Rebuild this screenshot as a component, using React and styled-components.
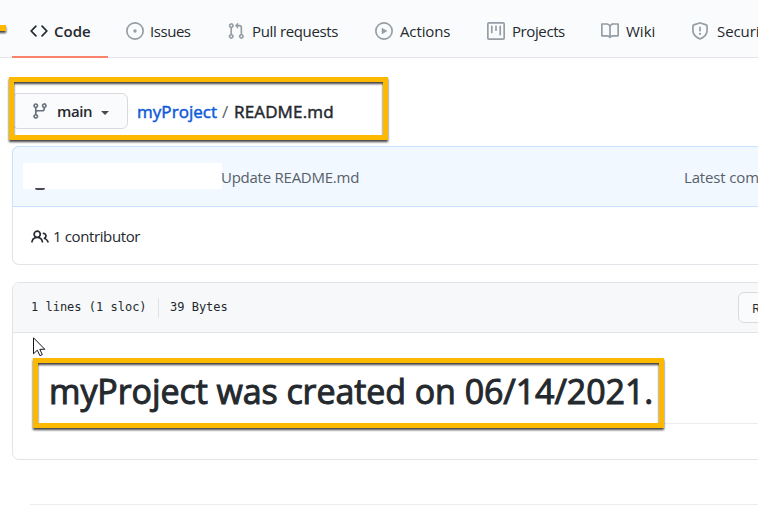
import React from "react";
import styled, { createGlobalStyle } from "styled-components";

const GlobalStyle = createGlobalStyle`
  *, *::before, *::after { box-sizing: border-box; }
  html, body { margin: 0; background: #fff; overflow: hidden; }
  body {
    font-family: "Open Sans", "Noto Sans", sans-serif;
    font-size: 15px;
    color: #24292e;
  }
`;

const ICONS = {
  code: "M4.72 3.22a.75.75 0 011.06 1.06L2.06 8l3.72 3.72a.75.75 0 11-1.06 1.06L.47 8.53a.75.75 0 010-1.06l4.25-4.25zm6.56 0a.75.75 0 10-1.06 1.06L13.94 8l-3.72 3.72a.75.75 0 101.06 1.06l4.25-4.25a.75.75 0 000-1.06l-4.25-4.25z",
  issue: "M8 9.5a1.5 1.5 0 100-3 1.5 1.5 0 000 3zM8 0a8 8 0 100 16A8 8 0 008 0zM1.5 8a6.5 6.5 0 1113 0 6.5 6.5 0 01-13 0z",
  pull: "M7.177 3.073L9.573.677A.25.25 0 0110 .854v4.792a.25.25 0 01-.427.177L7.177 3.427a.25.25 0 010-.354zM3.75 2.5a.75.75 0 100 1.5.75.75 0 000-1.5zm-2.25.75a2.25 2.25 0 113 2.122v5.256a2.251 2.251 0 11-1.5 0V5.372A2.25 2.25 0 011.5 3.25zM11 2.5h-1V4h1a1 1 0 011 1v5.628a2.251 2.251 0 101.5 0V5A2.5 2.5 0 0011 2.5zm1 10.25a.75.75 0 111.5 0 .75.75 0 01-1.5 0zM3.75 12a.75.75 0 100 1.5.75.75 0 000-1.5z",
  play: "M1.5 8a6.5 6.5 0 1113 0 6.5 6.5 0 01-13 0zM8 0a8 8 0 100 16A8 8 0 008 0zM6.379 5.227A.25.25 0 006 5.442v5.117a.25.25 0 00.379.214l4.264-2.559a.25.25 0 000-.428L6.379 5.227z",
  project: "M1.75 0A1.75 1.75 0 000 1.75v12.5C0 15.216.784 16 1.75 16h12.5A1.75 1.75 0 0016 14.25V1.75A1.75 1.75 0 0014.25 0H1.75zM1.5 1.75a.25.25 0 01.25-.25h12.5a.25.25 0 01.25.25v12.5a.25.25 0 01-.25.25H1.75a.25.25 0 01-.25-.25V1.75zM11.75 3a.75.75 0 00-.75.75v7.5a.75.75 0 001.5 0v-7.5a.75.75 0 00-.75-.75zm-8.25.75a.75.75 0 011.5 0v5.5a.75.75 0 01-1.5 0v-5.5zM8 3a.75.75 0 00-.75.75v3.5a.75.75 0 001.5 0v-3.5A.75.75 0 008 3z",
  book: "M0 1.75A.75.75 0 01.75 1h4.253c1.227 0 2.317.59 3 1.501A3.744 3.744 0 0111.006 1h4.245a.75.75 0 01.75.75v10.5a.75.75 0 01-.75.75h-4.507a2.25 2.25 0 00-1.591.659l-.622.621a.75.75 0 01-1.06 0l-.622-.621A2.25 2.25 0 005.258 13H.75a.75.75 0 01-.75-.75V1.75zm8.755 3a2.25 2.25 0 012.25-2.25H14.5v9h-3.757c-.71 0-1.4.201-1.992.572l.004-7.322zm-1.504 7.324l.004-5.073-.002-2.253A2.25 2.25 0 005.003 2.5H1.5v9h3.757a3.75 3.75 0 011.994.574z",
  shield: "M7.467.133a1.75 1.75 0 011.066 0l5.25 1.68A1.75 1.75 0 0115 3.48V7c0 1.566-.32 3.182-1.303 4.682-.983 1.498-2.585 2.813-5.032 3.855a1.7 1.7 0 01-1.33 0c-2.447-1.042-4.049-2.357-5.032-3.855C1.32 10.182 1 8.566 1 7V3.48a1.75 1.75 0 011.217-1.667l5.25-1.68zm.61 1.429a.25.25 0 00-.153 0l-5.25 1.68a.25.25 0 00-.174.238V7c0 1.358.275 2.666 1.057 3.86.784 1.194 2.121 2.34 4.366 3.297a.2.2 0 00.154 0c2.245-.956 3.582-2.104 4.366-3.298C13.225 9.666 13.5 8.36 13.5 7V3.48a.25.25 0 00-.174-.237l-5.25-1.68zM9 10.5a1 1 0 11-2 0 1 1 0 012 0zm-.25-5.75a.75.75 0 10-1.5 0v3a.75.75 0 001.5 0v-3z",
  branch: "M11.75 2.5a.75.75 0 100 1.5.75.75 0 000-1.5zm-2.25.75a2.25 2.25 0 113 2.122V6A2.5 2.5 0 0110 8.5H6a1 1 0 00-1 1v1.128a2.251 2.251 0 11-1.5 0V5.372a2.25 2.25 0 111.5 0v1.836A2.492 2.492 0 016 7h4a1 1 0 001-1v-.628A2.25 2.25 0 019.5 3.25zM4.25 12a.75.75 0 100 1.5.75.75 0 000-1.5zM3.5 3.25a.75.75 0 111.5 0 .75.75 0 01-1.5 0z",
  people: "M5.5 3.5a2 2 0 100 4 2 2 0 000-4zM2 5.5a3.5 3.5 0 115.898 2.549 5.507 5.507 0 013.034 4.084.75.75 0 11-1.482.235 4.001 4.001 0 00-7.9 0 .75.75 0 01-1.482-.236A5.507 5.507 0 013.102 8.05 3.49 3.49 0 012 5.5zM11 4a.75.75 0 100 1.5 1.5 1.5 0 01.666 2.844.75.75 0 00-.416.672v.352a.75.75 0 00.574.73c1.2.289 2.162 1.2 2.522 2.372a.75.75 0 101.434-.44 5.01 5.01 0 00-2.56-3.012A3 3 0 0011 4z",
};

const Svg = styled.svg`
  display: block;
  flex: none;
  width: 18px;
  height: 18px;
  fill: ${(p) => p.$color};
`;

const Icon = ({ name, color = "#959da5" }) => (
  <Svg viewBox="0 0 16 16" $color={color} aria-hidden="true">
    <path fillRule="evenodd" d={ICONS[name]} />
  </Svg>
);

const Page = styled.div`
  position: relative;
  width: 758px;
  height: 506px;
  overflow: hidden;
`;

const Nav = styled.nav`
  display: flex;
  height: 58px;
  padding-left: 12px;
  background: #fafbfc;
  border-bottom: 1px solid #e1e4e8;
`;

const Tab = styled.a`
  display: flex;
  flex: none;
  align-items: center;
  width: ${(p) => p.$width}px;
  height: 58px;
  padding: 6px 0 0 18px;
  gap: ${(p) => p.$gap ?? 6}px;
  font-weight: ${(p) => (p.$active ? 600 : 400)};
  letter-spacing: ${(p) => p.$track ?? 0}px;
  white-space: nowrap;
  border-bottom: 2px solid ${(p) => (p.$active ? "#f9826c" : "transparent")};
`;

const Toolbar = styled.div`
  display: flex;
  align-items: center;
  height: 88px;
  padding: 18px 0 0 12px;
`;

const BranchButton = styled.button`
  display: flex;
  align-items: center;
  flex: none;
  width: 116px;
  height: 36px;
  padding: 0 0 0 18px;
  font: 600 15px "Open Sans", sans-serif;
  letter-spacing: ${(p) => p.$track}px;
  color: #24292e;
  background: #fafbfc;
  border: 1px solid #d8dadd;
  border-radius: 6px;
`;

const BranchName = styled.span`
  width: 44px;
  margin-left: 8px;
  text-align: left;
`;

const Caret = styled.span`
  margin-top: 3px;
  border: 4.5px solid transparent;
  border-top-color: #444a50;
  border-bottom: 0;
`;

const Breadcrumb = styled.div`
  display: flex;
  margin: 2px 0 0 9px;
  gap: 5px;
  font-size: 17px;
  line-height: 26px;
  white-space: nowrap;
`;

const Crumb = styled.span`
  width: ${(p) => p.$width}px;
  letter-spacing: ${(p) => p.$track ?? 0}px;
  -webkit-text-stroke: ${(p) => (p.$plain ? 0 : 0.5)}px currentColor;
  color: ${(p) => p.$color ?? "#24292e"};
`;

const Card = styled.section`
  width: 780px;
  margin-left: 12px;
  border: 1px solid #e1e4e8;
  border-radius: 7px;
`;

const CommitCard = styled(Card)`
  height: 119px;
  border-top: 0;
`;

const CommitHeader = styled.header`
  display: flex;
  align-items: center;
  height: 61px;
  margin: 0 -1px;
  padding-left: 11px;
  color: #586069;
  background: #f1f8ff;
  border: 1px solid #c8e1ff;
  border-radius: 7px 7px 0 0;
  white-space: nowrap;
`;

const Redacted = styled.div`
  flex: none;
  width: 199px;
  height: 26px;
  margin: 0 0 2px -1px;
  padding: 25px 0 0 12px;
  background: #fff;
`;

const AvatarEdge = styled.div`
  width: 10px;
  height: 2px;
  background: #4d4652;
  border-radius: 0 0 5px 5px;
`;

const CommitMessage = styled.span`
  width: 463px;
  margin-left: -1px;
  letter-spacing: ${(p) => p.$track}px;
`;

const CommitMeta = styled.span`
  letter-spacing: ${(p) => p.$track}px;
`;

const Contributors = styled.div`
  display: flex;
  align-items: center;
  height: 57px;
  padding: 2px 0 0 18px;
  gap: 4px;
  letter-spacing: ${(p) => p.$track}px;
`;

const ContributorCount = styled.span`
  padding-bottom: 2px;
`;

const FileCard = styled(Card)`
  height: 178px;
  margin-top: 17px;
`;

const FileHeader = styled.header`
  display: flex;
  align-items: center;
  height: 50px;
  padding-left: 18px;
  font: 12px "DejaVu Sans Mono", monospace;
  background: #f6f8fa;
  border-bottom: 1px solid #e1e4e8;
  border-radius: 6px 6px 0 0;
  white-space: nowrap;
`;

const FileStat = styled.span`
  width: ${(p) => p.$width}px;
  flex: none;
  padding-bottom: 2px;
`;

const Divider = styled.span`
  flex: none;
  width: 1px;
  height: 20px;
  margin-right: 11px;
  background: #dfe2e5;
`;

const RawButton = styled.button`
  flex: none;
  width: 56px;
  height: 31px;
  padding: 1px 0 0 13px;
  text-align: left;
  font: 13px "Open Sans", sans-serif;
  color: #24292e;
  background: #fafbfc;
  border: 1px solid #d8dadd;
  border-radius: 6px;
`;

const Readme = styled.div`
  padding: 28px 0 0 36px;
`;

const Title = styled.h1`
  height: 63px;
  margin: 0;
  font-size: 34px;
  font-weight: 400;
  -webkit-text-stroke: 1px currentColor;
  line-height: 61px;
  letter-spacing: ${(p) => p.$track}px;
  border-bottom: 1px solid #eaecef;
  white-space: nowrap;
`;

const FooterRule = styled.hr`
  height: 1px;
  margin: 44px 0 0 30px;
  border: 0;
  background: #eaecef;
`;

/* Annotation frames drawn over the page. */
const Highlight = styled.div`
  position: absolute;
  left: ${(p) => p.$x}px;
  top: ${(p) => p.$y}px;
  width: ${(p) => p.$w}px;
  height: ${(p) => p.$h}px;
  border: ${(p) => p.$b ?? 5}px solid #fdb900;
  filter: drop-shadow(0 2px 1px rgba(0, 0, 0, 0.75));
  pointer-events: none;
`;

const Cursor = styled.svg`
  position: absolute;
  left: 33px;
  top: 337px;
  width: 13px;
  height: 20px;
`;

const TABS = [
  { icon: "code", label: "Code", width: 96, active: true },
  { icon: "issue", label: "Issues", width: 101, track: -0.45 },
  { icon: "pull", label: "Pull requests", width: 148, gap: 7, track: -0.36 },
  { icon: "play", label: "Actions", width: 112, gap: 7, track: -0.12 },
  { icon: "project", label: "Projects", width: 114, gap: 7, track: -0.4 },
  { icon: "book", label: "Wiki", width: 90, gap: 7 },
  { icon: "shield", label: "Security", width: 110, gap: 8, track: -0.1 },
];

export default function App() {
  return (
    <Page>
      <GlobalStyle />
      <Nav>
        {TABS.map((t) => (
          <Tab key={t.label} $width={t.width} $gap={t.gap} $active={t.active} $track={t.track}>
            <Icon name={t.icon} color={t.active ? "#24292e" : undefined} />
            {t.label}
          </Tab>
        ))}
      </Nav>
      <Toolbar>
        <BranchButton $track={-0.4}>
          <Icon name="branch" color="#6a737d" />
          <BranchName>main</BranchName>
          <Caret />
        </BranchButton>
        <Breadcrumb>
          <Crumb $width={80} $color="#0f5bd8" $track={0.05}>myProject</Crumb>
          <Crumb $width={7} $color="#586069" $plain>/</Crumb>
          <Crumb $track={0.15}>README.md</Crumb>
        </Breadcrumb>
      </Toolbar>
      <CommitCard>
        <CommitHeader>
          <Redacted>
            <AvatarEdge />
          </Redacted>
          <CommitMessage $track={-0.25}>Update README.md</CommitMessage>
          <CommitMeta $track={-0.15}>Latest commit</CommitMeta>
        </CommitHeader>
        <Contributors $track={-0.38}>
          <Icon name="people" color="#24292e" />
          <ContributorCount>1 contributor</ContributorCount>
        </Contributors>
      </CommitCard>
      <FileCard>
        <FileHeader>
          <FileStat $width={127}>1 lines (1 sloc)</FileStat>
          <Divider />
          <FileStat $width={568}>39 Bytes</FileStat>
          <RawButton>Raw</RawButton>
        </FileHeader>
        <Readme>
          <Title $track={-0.08}>myProject was created on 06/14/2021.</Title>
        </Readme>
      </FileCard>
      <FooterRule />
      <Highlight $x={-20} $y={25} $w={26} $h={6} $b={3} />
      <Highlight $x={9} $y={77} $w={379} $h={63} />
      <Highlight $x={33} $y={358} $w={631} $h={70} />
      <Cursor viewBox="0 0 13 20">
        <path d="M.5.8v16l3.8-3.6 2.6 5.5 2.4-1.1-2.5-5.3h5z" fill="#fff" stroke="#15151f" />
      </Cursor>
    </Page>
  );
}
